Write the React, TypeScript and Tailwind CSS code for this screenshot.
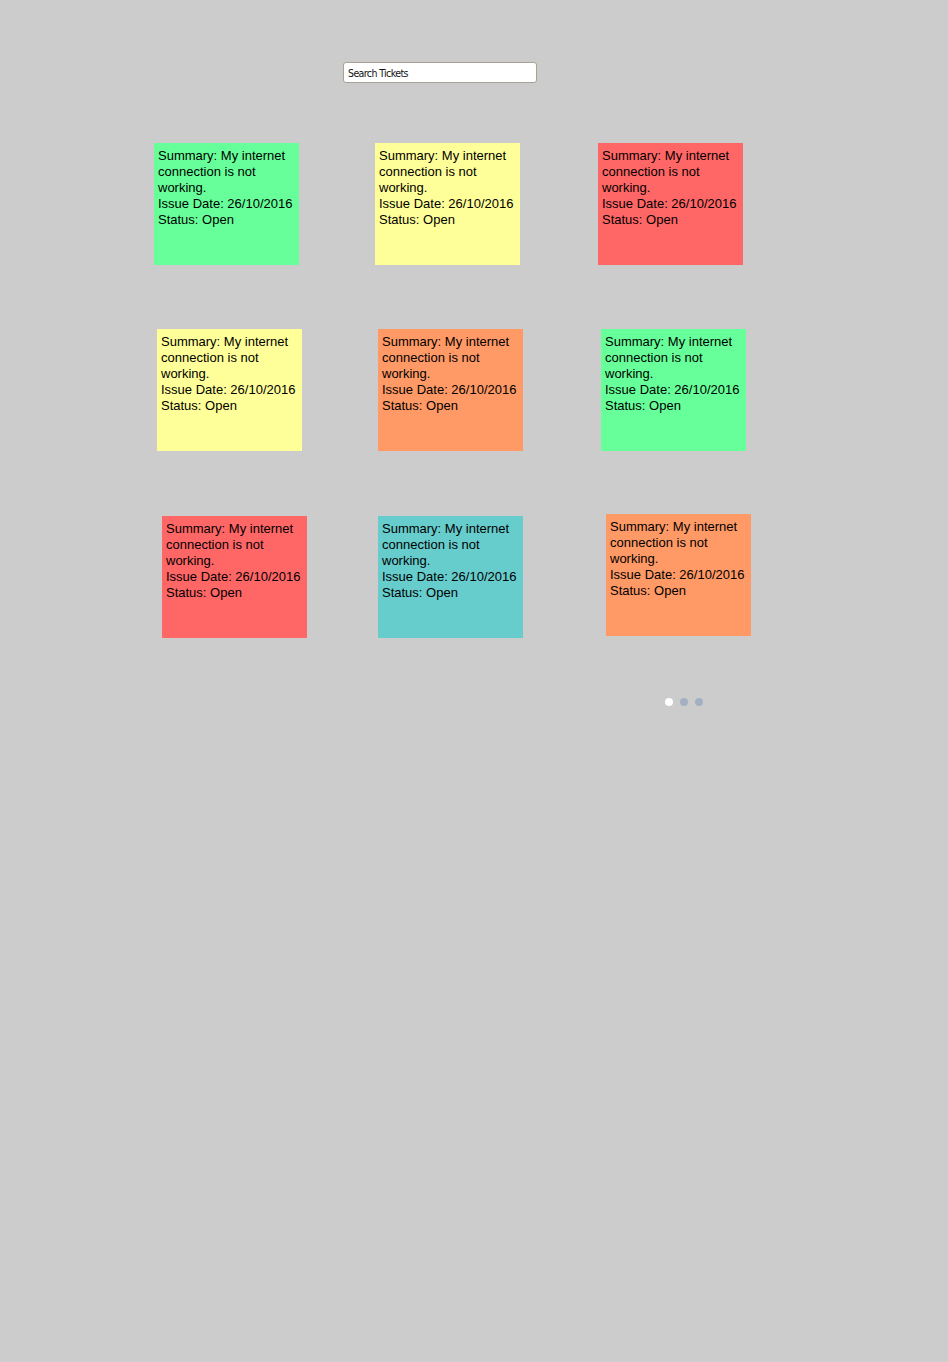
import React from 'react';

type Ticket = { color: string; offset: string };

const tickets: Ticket[] = [
  { color: 'bg-[#66ff99]', offset: '' },
  { color: 'bg-[#ffff99]', offset: '' },
  { color: 'bg-[#ff6666]', offset: '' },
  { color: 'bg-[#ffff99]', offset: 'ml-[3px]' },
  { color: 'bg-[#ff9966]', offset: 'ml-[3px]' },
  { color: 'bg-[#66ff99]', offset: 'ml-[3px]' },
  { color: 'bg-[#ff6666]', offset: 'ml-[8px] mt-[1px]' },
  { color: 'bg-[#66cccc]', offset: 'ml-[3px] mt-[1px]' },
  { color: 'bg-[#ff9966]', offset: 'ml-[8px] -mt-[1px]' },
];

const TicketCard: React.FC<{ ticket: Ticket }> = ({ ticket }) => (
  <div
    className={`${ticket.color} ${ticket.offset} w-[145px] h-[122px] px-[4px] pt-[5px] text-[13px] leading-[16px] text-black`}
    style={{ fontFamily: '"Liberation Sans", Arial, sans-serif' }}
  >
    Summary: My internet connection is not working.
    <br />
    Issue Date: 26/10/2016
    <br />
    Status: Open
  </div>
);

const App: React.FC = () => {
  return (
    <div className="min-h-[1362px] w-full bg-[#cccccc] pt-[62px]">
      {/* Search */}
      <div className="ml-[343px] flex">
        <input
          type="text"
          placeholder="Search Tickets"
          className="block w-[194px] h-[21px] bg-white border border-[#a8a296] rounded-[3px] px-[4px] pt-[1px] text-[10.5px] text-black placeholder:text-[#111] outline-none"
          style={{ fontFamily: '"DejaVu Sans Condensed", "Liberation Sans Narrow", sans-serif', letterSpacing: '-0.6px' }}
        />
      </div>

      {/* Tickets */}
      <div className="ml-[154px] mt-[60px] grid grid-cols-[221px_223px_145px] gap-y-[64px]">
        {tickets.map((t, i) => (
          <TicketCard key={i} ticket={t} />
        ))}
      </div>

      {/* Pager dots */}
      <div className="ml-[665px] mt-[60px] flex gap-[7px]">
        <span className="w-[8px] h-[8px] rounded-full bg-white" />
        <span className="w-[8px] h-[8px] rounded-full bg-[#a3b0c2]" />
        <span className="w-[8px] h-[8px] rounded-full bg-[#a3b0c2]" />
      </div>
    </div>
  );
};

export default App;
